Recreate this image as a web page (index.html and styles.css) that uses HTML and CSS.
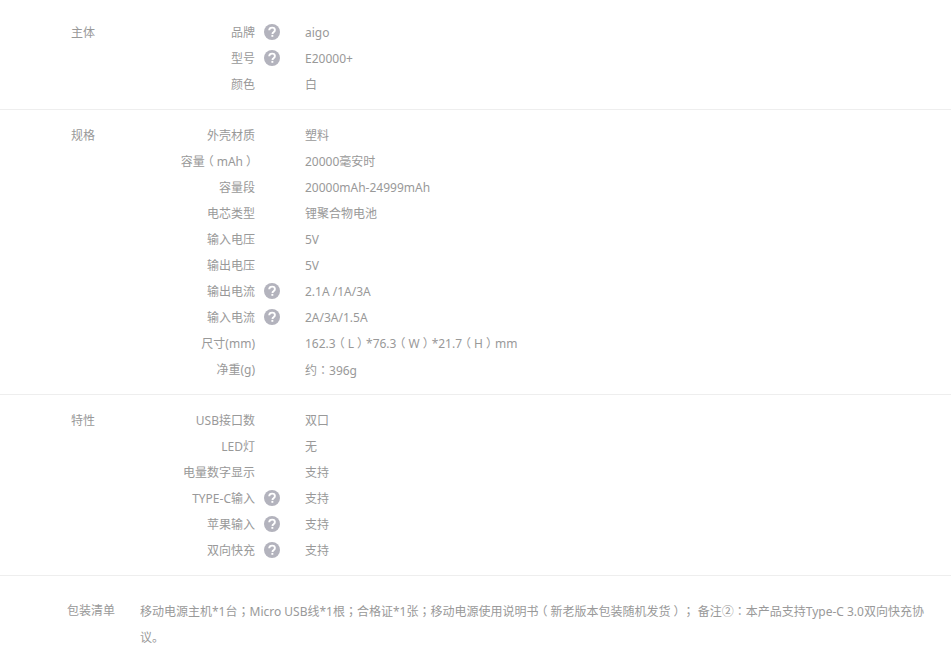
FILE: index.html
```html
<!DOCTYPE html>
<html lang="zh-CN">
<head>
<meta charset="utf-8">
<title>规格参数</title>
<link rel="stylesheet" href="styles.css">
</head>
<body>
<svg class="defs" width="0" height="0" aria-hidden="true">
  <symbol id="help" viewBox="0 0 16 16">
    <circle cx="8" cy="8" r="8" fill="#b3b3bd"/>
    <path d="M5.2 6.2C5.3 4.6 6.5 3.6 8.1 3.6c1.6 0 2.8 1 2.8 2.4 0 1.1-.6 1.7-1.4 2.3-.7.5-1 .9-1 1.7" fill="none" stroke="#fff" stroke-width="1.9"/>
    <rect x="7.4" y="10.9" width="1.9" height="1.9" fill="#fff"/>
  </symbol>
</svg>
<main class="specs">
  <section class="group">
    <h3 class="group-title">主体</h3>
    <dl class="rows">
      <div class="row"><dt>品牌</dt><dd class="slot"><svg class="help"><use href="#help"/></svg></dd><dd>aigo</dd></div>
      <div class="row"><dt>型号</dt><dd class="slot"><svg class="help"><use href="#help"/></svg></dd><dd>E20000+</dd></div>
      <div class="row"><dt>颜色</dt><dd class="slot"></dd><dd>白</dd></div>
    </dl>
  </section>
  <section class="group">
    <h3 class="group-title">规格</h3>
    <dl class="rows">
      <div class="row"><dt>外壳材质</dt><dd class="slot"></dd><dd>塑料</dd></div>
      <div class="row"><dt>容量<span class="paren">（</span>mAh<span class="paren">）</span></dt><dd class="slot"></dd><dd>20000毫安时</dd></div>
      <div class="row"><dt>容量段</dt><dd class="slot"></dd><dd>20000mAh-24999mAh</dd></div>
      <div class="row"><dt>电芯类型</dt><dd class="slot"></dd><dd>锂聚合物电池</dd></div>
      <div class="row"><dt>输入电压</dt><dd class="slot"></dd><dd>5V</dd></div>
      <div class="row"><dt>输出电压</dt><dd class="slot"></dd><dd>5V</dd></div>
      <div class="row"><dt>输出电流</dt><dd class="slot"><svg class="help"><use href="#help"/></svg></dd><dd>2.1A /1A/3A</dd></div>
      <div class="row"><dt>输入电流</dt><dd class="slot"><svg class="help"><use href="#help"/></svg></dd><dd>2A/3A/1.5A</dd></div>
      <div class="row"><dt>尺寸(mm)</dt><dd class="slot"></dd><dd>162.3<span class="paren">（</span>L<span class="paren">）</span>*76.3<span class="paren">（</span>W<span class="paren">）</span>*21.7<span class="paren">（</span>H<span class="paren">）</span>mm</dd></div>
      <div class="row"><dt>净重(g)</dt><dd class="slot"></dd><dd>约<span class="mid" lang="zh-TW">：</span>396g</dd></div>
    </dl>
  </section>
  <section class="group">
    <h3 class="group-title">特性</h3>
    <dl class="rows">
      <div class="row"><dt>USB接口数</dt><dd class="slot"></dd><dd>双口</dd></div>
      <div class="row"><dt>LED灯</dt><dd class="slot"></dd><dd>无</dd></div>
      <div class="row"><dt>电量数字显示</dt><dd class="slot"></dd><dd>支持</dd></div>
      <div class="row"><dt>TYPE-C输入</dt><dd class="slot"><svg class="help"><use href="#help"/></svg></dd><dd>支持</dd></div>
      <div class="row"><dt>苹果输入</dt><dd class="slot"><svg class="help"><use href="#help"/></svg></dd><dd>支持</dd></div>
      <div class="row"><dt>双向快充</dt><dd class="slot"><svg class="help"><use href="#help"/></svg></dd><dd>支持</dd></div>
    </dl>
  </section>
  <section class="package">
    <h3 class="package-title">包装清单</h3>
    <p class="package-text">移动电源主机*1台<span class="mid" lang="zh-TW">；</span>Micro USB线*1根<span class="mid" lang="zh-TW">；</span>合格证*1张<span class="mid" lang="zh-TW">；</span>移动电源使用说明书<span class="paren">（</span>新老版本包装随机发货<span class="paren">）</span><span class="mid" lang="zh-TW">；</span> 备注②<span class="mid" lang="zh-TW">：</span>本产品支持Type-C 3.0双向快充协<span class="tail">议。</span></p>
  </section>
</main>
</body>
</html>
```
FILE: styles.css
```css
html, body {
  margin: 0;
  padding: 0;
  background: #fff;
}
body {
  font-family: "Noto Sans", "Noto Sans CJK SC", sans-serif;
  font-size: 12px;
  line-height: 26px;
  color: #999;
  overflow: hidden;
  text-spacing-trim: space-all;
}
.defs {
  position: absolute;
}
.specs {
  padding-top: 19px;
}
.group {
  display: flex;
  padding: 0 0 12px 71px;
  margin-bottom: 12px;
  border-bottom: 1px solid #eee;
}
.group-title,
.package-title {
  margin: 0;
  font-size: 12px;
  font-weight: 400;
}
.group-title {
  width: 60px;
  line-height: 28px;
}
.rows {
  margin: 0;
}
.row {
  display: flex;
  height: 26px;
  line-height: 28px;
}
.row dt {
  width: 124px;
  text-align: right;
  white-space: nowrap;
}
.row dd {
  margin: 0;
  white-space: nowrap;
}
.row .slot {
  width: 50px;
  display: flex;
  align-items: center;
}
.help {
  width: 16px;
  height: 16px;
  margin-left: 9px;
}
.paren {
  font-feature-settings: "halt";
  padding: 0 3px;
}
.mid {
  font-family: "Noto Sans CJK TC", sans-serif;
}
.tail {
  display: inline-block;
}
.package {
  display: flex;
  padding: 10px 20px 0 67px;
}
.package-title {
  width: 73px;
  flex: none;
}
.package-text {
  margin: 0;
}
```
